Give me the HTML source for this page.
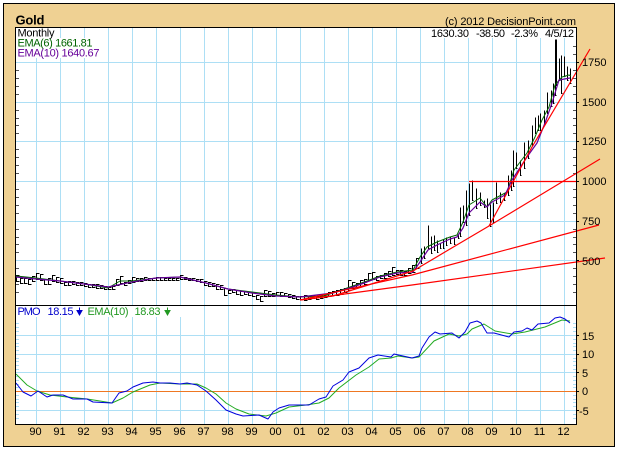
<!DOCTYPE html>
<html><head><meta charset="utf-8"><style>
html,body{margin:0;padding:0;background:#fff}
svg{display:block}
text{font-family:"Liberation Sans",Arial,sans-serif;font-size:11px}
</style></head><body>
<svg width="618" height="450" viewBox="0 0 618 450" xmlns="http://www.w3.org/2000/svg">
<rect x="3.5" y="3.5" width="611" height="443" fill="#EFD193" stroke="#000" shape-rendering="crispEdges"/>
<rect x="15.5" y="27.5" width="561" height="397" fill="#fff"/>
<g shape-rendering="crispEdges" fill="none">
<path stroke="#ADDFF5" d="M36.500 28V424M60.500 28V424M84.500 28V424M108.500 28V424M132.500 28V424M156.500 28V424M180.500 28V424M204.500 28V424M228.500 28V424M252.500 28V424M276.500 28V424M300.500 28V424M324.500 28V424M348.500 28V424M372.500 28V424M396.500 28V424M420.500 28V424M444.500 28V424M468.500 28V424M492.500 28V424M516.500 28V424M540.500 28V424M564.500 28V424M16 62.500H576M16 102.500H576M16 141.500H576M16 181.500H576M16 221.500H576M16 260.500H576M16 335.500H576M16 354.500H576M16 372.500H576M16 410.500H576"/>
<path stroke="#ADDFF5" d="M573 323.500h3M573 327.500h3M573 331.500h3M573 339.500h3M573 343.500h3M573 346.500h3M573 350.500h3M573 358.500h3M573 361.500h3M573 365.500h3M573 369.500h3M573 376.500h3M573 380.500h3M573 384.500h3M573 387.500h3M573 395.500h3M573 399.500h3M573 402.500h3M573 406.500h3M573 414.500h3M573 418.500h3M16 323.500h3M16 327.500h3M16 331.500h3M16 339.500h3M16 343.500h3M16 346.500h3M16 350.500h3M16 358.500h3M16 361.500h3M16 365.500h3M16 369.500h3M16 376.500h3M16 380.500h3M16 384.500h3M16 387.500h3M16 395.500h3M16 399.500h3M16 402.500h3M16 406.500h3M16 414.500h3M16 418.500h3"/>
<path stroke="#555" d="M573 46.500h3M573 54.500h3M573 70.500h3M573 78.500h3M573 86.500h3M573 94.500h3M573 110.500h3M573 118.500h3M573 125.500h3M573 133.500h3M573 149.500h3M573 157.500h3M573 165.500h3M573 173.500h3M573 189.500h3M573 197.500h3M573 205.500h3M573 213.500h3M573 229.500h3M573 237.500h3M573 244.500h3M573 252.500h3M573 268.500h3M573 276.500h3M573 284.500h3M573 292.500h3M16 70.500h3M16 78.500h3M16 86.500h3M16 94.500h3M16 110.500h3M16 118.500h3M16 125.500h3M16 133.500h3M16 149.500h3M16 157.500h3M16 165.500h3M16 173.500h3M16 189.500h3M16 197.500h3M16 205.500h3M16 213.500h3M16 229.500h3M16 237.500h3M16 244.500h3M16 252.500h3M16 268.500h3M16 276.500h3M16 284.500h3M16 292.500h3"/>
<path stroke="#000" d="M576 62.500h3M576 102.500h3M576 141.500h3M576 181.500h3M576 221.500h3M576 260.500h3M576 354.500h3M576 335.500h3M576 372.500h3M576 391.500h3M576 410.500h3"/>
<path stroke="#EE7722" d="M16 391.500H576"/>
</g>
<path transform="translate(.5 .5)" fill="none" stroke="#000" stroke-width="1" shape-rendering="crispEdges" d="M19 275h-3V281h3M23 278h-3V283h3M27 278h-3V283h3M31 279h-3V284h3M35 276h-3V281h3M39 273h-3V279h3M43 274h-3V280h3M47 279h-3V284h3M51 278h-3V284h3M55 275h-3V281h3M59 277h-3V282h3M63 278h-3V283h3M67 282h-3V285h3M71 281h-3V285h3M75 281h-3V284h3M79 282h-3V285h3M83 282h-3V285h3M87 283h-3V286h3M91 284h-3V287h3M95 284h-3V287h3M99 284h-3V288h3M103 285h-3V288h3M107 286h-3V289h3M111 287h-3V289h3M115 286h-3V289h3M119 279h-3V285h3M123 276h-3V283h3M127 282h-3V285h3M131 280h-3V283h3M135 277h-3V282h3M139 278h-3V281h3M143 278h-3V281h3M147 277h-3V280h3M151 278h-3V280h3M155 278h-3V280h3M159 277h-3V280h3M163 277h-3V280h3M167 278h-3V280h3M171 278h-3V280h3M175 278h-3V280h3M179 278h-3V280h3M183 275h-3V279h3M187 277h-3V279h3M191 278h-3V280h3M195 278h-3V280h3M199 279h-3V281h3M203 279h-3V282h3M207 281h-3V285h3M211 282h-3V286h3M215 283h-3V286h3M219 284h-3V289h3M223 285h-3V289h3M227 288h-3V295h3M231 290h-3V293h3M235 289h-3V292h3M239 290h-3V294h3M243 291h-3V295h3M247 291h-3V294h3M251 292h-3V295h3M255 292h-3V296h3M259 295h-3V299h3M263 296h-3V301h3M267 290h-3V296h3M271 291h-3V296h3M275 293h-3V296h3M279 292h-3V295h3M283 292h-3V296h3M287 293h-3V296h3M291 294h-3V297h3M295 295h-3V298h3M299 296h-3V299h3M303 296h-3V299h3M307 295h-3V300h3M311 296h-3V299h3M315 295h-3V298h3M319 296h-3V299h3M323 295h-3V298h3M327 294h-3V297h3M331 292h-3V296h3M335 291h-3V295h3M339 290h-3V295h3M343 289h-3V294h3M347 288h-3V292h3M351 280h-3V290h3M355 282h-3V288h3M359 283h-3V287h3M363 280h-3V286h3M367 279h-3V284h3M371 273h-3V280h3M375 272h-3V279h3M379 276h-3V280h3M383 275h-3V278h3M387 273h-3V278h3M391 271h-3V276h3M395 267h-3V275h3M399 270h-3V274h3M403 270h-3V275h3M407 271h-3V275h3M411 268h-3V273h3M415 265h-3V272h3M419 258h-3V268h3M421 248V263h1M424 246V258h1M428 225V248h1M431 236V253h1M434 235V250h1M437 240V252h1M440 243V248h1M443 239V248h1M446 237V245h1M450 236V243h1M454 237V244h1M458 234V238h1M460 207V236h1M463 205V222h1M466 190V225h1M469 183V215h1M472 180V200h1M476 188V208h1M480 192V205h1M484 200V207h1M487 198V218h1M490 204V226h1M493 202V222h1M496 182V203h1M500 192V202h1M504 193V200h1M508 175V195h1M511 170V190h1M513 150V186h1M516 152V168h1M520 160V175h1M524 142V168h1M528 140V158h1M532 125V145h1M535 117V133h1M538 115V130h1M540 113V130h1M544 110V123h1M547 92V113h1M551 90V106h1M553 83V103h1M555 39V95h1M556 39V85h1M559 58V80h1M561 55V93h1M564 56V76h1M567 66V80h1M570 68V83h1"/>
<g fill="none" stroke-linejoin="round">
<path stroke="#006400" d="M16 276L36 278L60 281L84 284L108 288L120 281L132 281L156 278L180 277L206 283L228 289L252 292L276 295L300 297L324 296L350 287L367 281L380 276L397 272L413 270L420 257L427 247L437 242L450 237L457 235L463 222L469 205L480 198L487 207L492 200L507 192L514 170L527 153L535 137L542 120L549 107L555 85L562 77L569 75L571 76"/>
<path stroke="#660099" stroke-width="1.200" d="M16 277L36 279L60 281L84 284L108 287L132 282L156 278L180 277L206 283L228 289L252 293L276 296L300 297L333 293L350 288L367 282L380 277L397 273L413 272L420 262L428 250L437 245L450 239L457 237L463 228L469 213L480 202L487 207L492 202L505 195L512 180L527 157L537 143L545 123L552 103L559 80L570 78"/>
<path stroke="#F00" stroke-width="1.200" d="M469 181.500H576"/>
<path stroke="#F00" stroke-width="1.200" d="M489 226L532 147L590 49"/>
<path stroke="#F00" stroke-width="1.200" d="M300 300L333 296L413 271L450 249L489 226L600 159"/>
<path stroke="#F00" stroke-width="1.200" d="M300 300L412 275L599 225"/>
<path stroke="#F00" stroke-width="1.200" d="M300 300L412 285L605 258"/>
<path stroke="#22AA22" d="M16 374L27 385L37 391L50 395L67 397L87 399L100 401L112 403L123 398L133 392L150 385L160 383L180 384L197 384L206 388L216 394L226 403L236 409L249 414L266 416L276 413L289 407L306 405L319 403L329 398L339 388L356 375L369 367L379 359L391 358L398 356L412 358L419 357L434 341L449 334L459 336L467 334L472 329L484 324L495 331L512 334L525 332L545 327L562 320L570 321"/>
<path stroke="#0000DD" d="M16 383L23 392L31 396L38 391L47 397L53 395L63 395L73 399L87 399L93 402L112 403L119 393L127 391L133 387L143 383L153 382L160 383L170 383L180 384L187 383L197 385L206 391L216 400L226 410L236 414L243 416L259 415L268 419L273 412L279 408L289 405L309 405L319 399L326 397L333 386L343 380L349 372L359 368L369 358L378 355L391 357L394 354L403 356L412 358L419 356L422 348L429 337L435 332L440 334L452 333L459 338L465 332L470 323L477 321L481 323L487 333L494 333L509 337L514 332L522 331L527 328L532 330L538 324L549 323L555 318L560 317L565 319L570 323"/>
</g>
<rect x="15.500" y="27.500" width="561" height="397" fill="none" stroke="#000" shape-rendering="crispEdges"/>
<path d="M16 305.500H576" stroke="#000" shape-rendering="crispEdges"/>
<rect x="17" y="28" width="34" height="10" fill="#fff"/>
<rect x="17" y="38" width="76" height="10" fill="#fff"/>
<rect x="17" y="48" width="82" height="10" fill="#fff"/>
<rect x="431" y="28" width="145" height="10" fill="#fff"/>
<rect x="17" y="306" width="180" height="11" fill="#fff"/>
<text x="15.500" y="24.500" font-weight="bold" style="font-size:13px" textLength="29" lengthAdjust="spacing">Gold</text>
<text x="445" y="25" textLength="131" lengthAdjust="spacing">(c) 2012 DecisionPoint.com</text>
<text x="17.500" y="36.500" textLength="37" lengthAdjust="spacing">Monthly</text>
<text x="17.500" y="46.500" fill="#006400" textLength="75" lengthAdjust="spacing">EMA(6) 1661.81</text>
<text x="17.500" y="56.500" fill="#660099" textLength="82" lengthAdjust="spacing">EMA(10) 1640.67</text>
<text x="431" y="37" textLength="38" lengthAdjust="spacing">1630.30</text>
<text x="476" y="37" textLength="29" lengthAdjust="spacing">-38.50</text>
<text x="511" y="37" textLength="27" lengthAdjust="spacing">-2.3%</text>
<text x="545" y="37" textLength="29" lengthAdjust="spacing">4/5/12</text>
<g>
<text x="582" y="66">1750</text><text x="582" y="106">1500</text><text x="582" y="145">1250</text><text x="582" y="185">1000</text><text x="582" y="225">750</text><text x="582" y="265">500</text>
<text x="582" y="340">15</text><text x="582" y="358">10</text><text x="582" y="377">5</text><text x="582" y="395">0</text><text x="579" y="415">-5</text>
</g>
<text x="17.500" y="315" fill="#0000CC" textLength="23" lengthAdjust="spacing">PMO</text>
<text x="47.500" y="315" fill="#0000CC" textLength="26" lengthAdjust="spacing">18.15</text>
<path d="M79.500 307.500V311M77 310.500h5L79.500 315Z" fill="#0000CC" stroke="#0000CC" stroke-width="1"/>
<text x="87.500" y="315" fill="#229922" textLength="41" lengthAdjust="spacing">EMA(10)</text>
<text x="134.500" y="315" fill="#229922" textLength="26" lengthAdjust="spacing">18.83</text>
<path d="M167.500 307.500V311M165 310.500h5L167.500 315Z" fill="#229922" stroke="#229922" stroke-width="1"/>
<g text-anchor="middle">
<text x="35.500" y="435">90</text><text x="59.500" y="435">91</text><text x="83.500" y="435">92</text><text x="107.500" y="435">93</text><text x="131.500" y="435">94</text><text x="155.500" y="435">95</text><text x="179.500" y="435">96</text><text x="203.500" y="435">97</text><text x="227.500" y="435">98</text><text x="251.500" y="435">99</text><text x="275.500" y="435">00</text><text x="299.500" y="435">01</text><text x="323.500" y="435">02</text><text x="347.500" y="435">03</text><text x="371.500" y="435">04</text><text x="395.500" y="435">05</text><text x="419.500" y="435">06</text><text x="443.500" y="435">07</text><text x="467.500" y="435">08</text><text x="491.500" y="435">09</text><text x="515.500" y="435">10</text><text x="539.500" y="435">11</text><text x="563.500" y="435">12</text>
</g>
</svg>
</body></html>
